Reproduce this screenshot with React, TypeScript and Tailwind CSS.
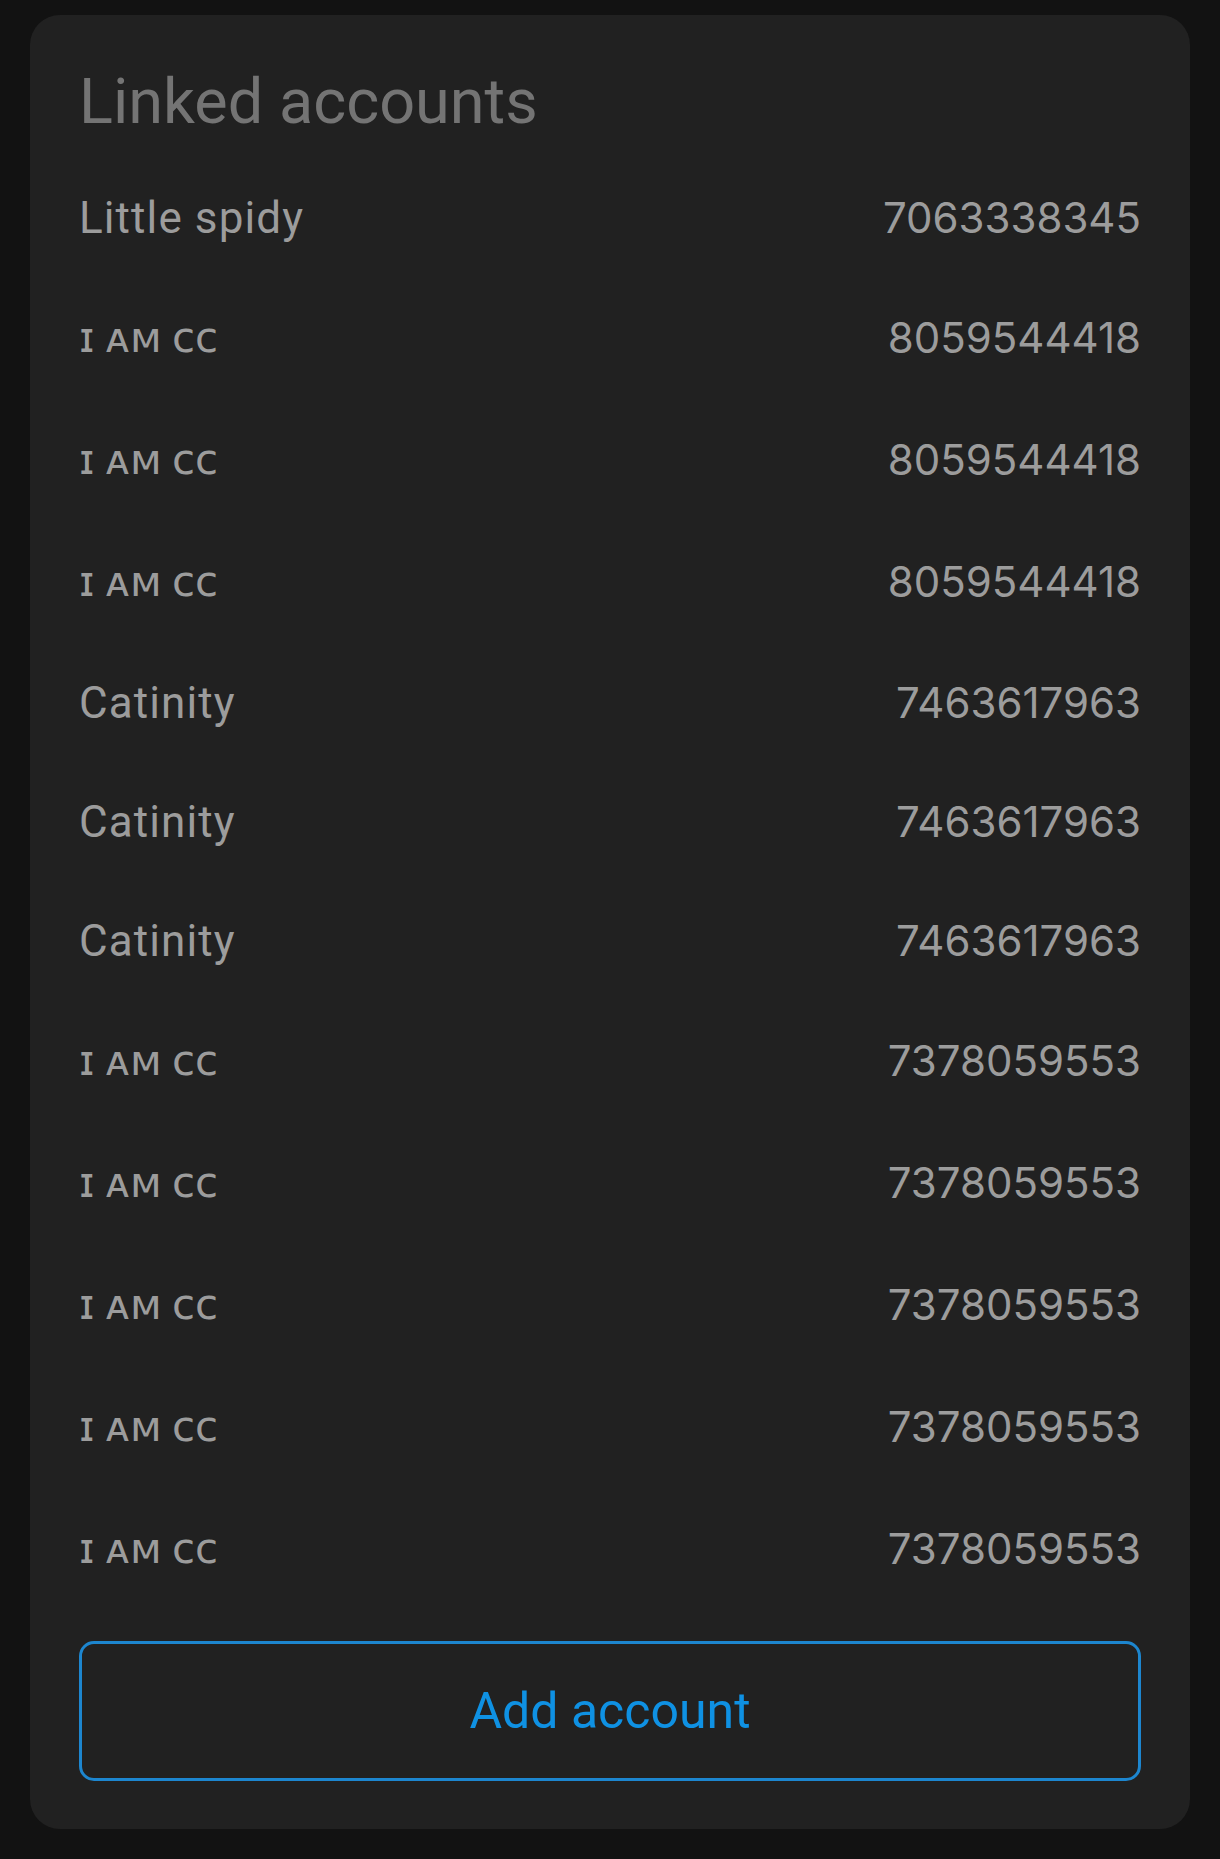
import React from 'react';

type Account = {
  name: string;
  number: string;
  smallCaps?: boolean;
};

const ACCOUNTS: Account[] = [
  { name: 'Little spidy', number: '7063338345' },
  { name: 'ɪ ᴀᴍ ᴄᴄ', number: '8059544418', smallCaps: true },
  { name: 'ɪ ᴀᴍ ᴄᴄ', number: '8059544418', smallCaps: true },
  { name: 'ɪ ᴀᴍ ᴄᴄ', number: '8059544418', smallCaps: true },
  { name: 'Catinity', number: '7463617963' },
  { name: 'Catinity', number: '7463617963' },
  { name: 'Catinity', number: '7463617963' },
  { name: 'ɪ ᴀᴍ ᴄᴄ', number: '7378059553', smallCaps: true },
  { name: 'ɪ ᴀᴍ ᴄᴄ', number: '7378059553', smallCaps: true },
  { name: 'ɪ ᴀᴍ ᴄᴄ', number: '7378059553', smallCaps: true },
  { name: 'ɪ ᴀᴍ ᴄᴄ', number: '7378059553', smallCaps: true },
  { name: 'ɪ ᴀᴍ ᴄᴄ', number: '7378059553', smallCaps: true },
];

function AccountRow({ account }: { account: Account }) {
  return (
    <div
      className={`flex items-center justify-between leading-[42px] text-[#9c9c9c] ${
        account.smallCaps ? 'h-[122px]' : 'h-[119px]'
      }`}
    >
      <span className={account.smallCaps ? 'text-[42px]' : 'text-[44px] tracking-[1.1px]'}>
        {account.name}
      </span>
      <span className="font-['Inter',sans-serif] text-[42px]">{account.number}</span>
    </div>
  );
}

export default function App() {
  return (
    <div className="min-h-screen bg-[#121212] px-[30px] pt-[15px] pb-[30px] font-['Roboto','DejaVu_Sans',sans-serif]">
      <div className="rounded-[30px] bg-[#212121] px-[49px] pt-[51px] pb-[48px]">
        {/* Header */}
        <h2 className="text-[63px] leading-[72px] text-[#747474]">Linked accounts</h2>

        {/* List */}
        <div className="mt-[20px]">
          {ACCOUNTS.map((a, i) => (
            <AccountRow key={i} account={a} />
          ))}
        </div>

        {/* Action */}
        <button
          type="button"
          className="mt-[31px] flex h-[140px] w-full items-center justify-center rounded-[15px] border-[3px] border-[#1d86cf] text-[50px] leading-[50px] text-[#0f91e3]"
        >
          Add account
        </button>
      </div>
    </div>
  );
}
